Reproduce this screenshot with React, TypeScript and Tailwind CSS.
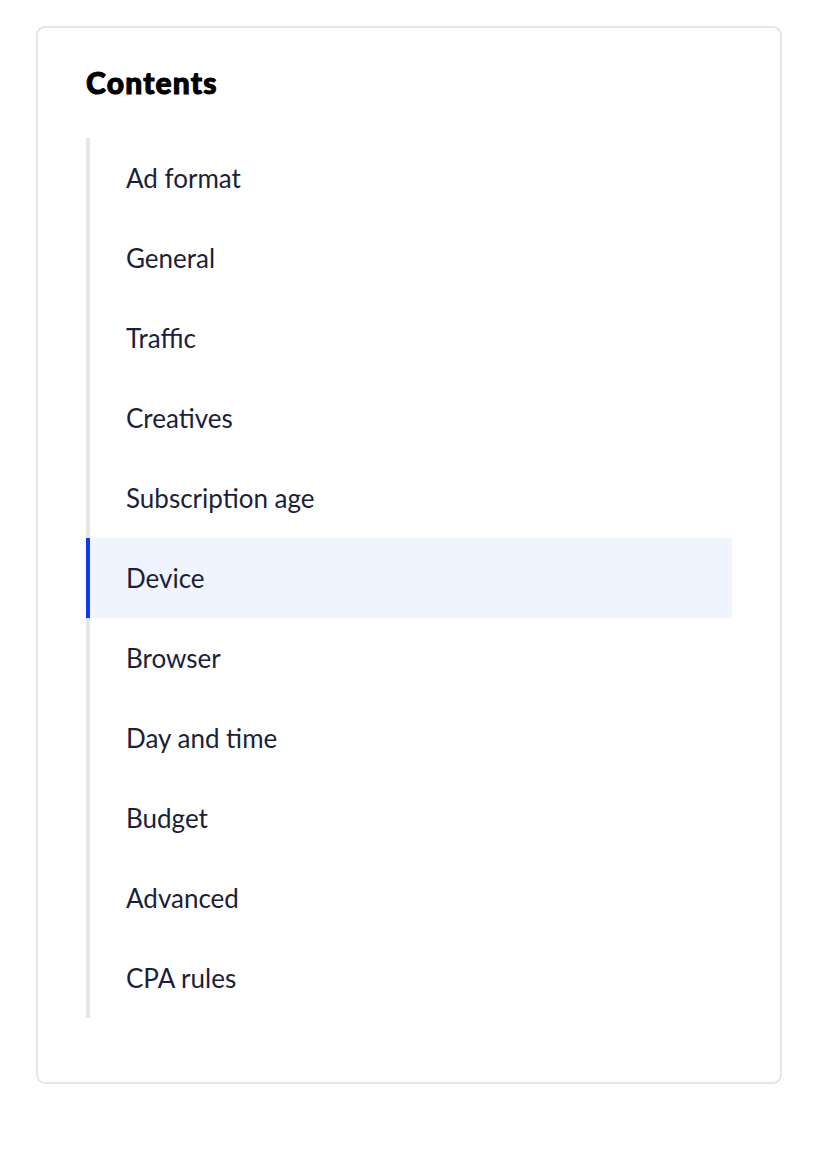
import React from "react";

const items = [
  "Ad format",
  "General",
  "Traffic",
  "Creatives",
  "Subscription age",
  "Device",
  "Browser",
  "Day and time",
  "Budget",
  "Advanced",
  "CPA rules",
];

export default function App() {
  const active = "Device";
  return (
    <div className="min-h-screen bg-white pt-[26px] pl-[36px] pr-[52px] font-['Lato',sans-serif]">
      <div className="rounded-[9px] border-2 border-[#e6e6e6] px-[48px] pt-[34px] pb-[64px]">
        <h2 className="text-[30px] font-black leading-[40px] tracking-[1.2px] text-black [-webkit-text-stroke:1px_black]">
          Contents
        </h2>
        <ul className="mt-[36px] border-l-4 border-[#e6e6e6]">
          {items.map((item) => {
            const isActive = item === active;
            return (
              <li
                key={item}
                className={
                  isActive
                    ? "-ml-[4px] flex h-[80px] items-center border-l-4 border-[#0a3cf5] bg-[#f0f4fe] pl-[36px] text-[26px] text-[#1b1f3b]"
                    : "flex h-[80px] items-center pl-[36px] text-[26px] text-[#1b1f3b]"
                }
              >
                {item}
              </li>
            );
          })}
        </ul>
      </div>
    </div>
  );
}
